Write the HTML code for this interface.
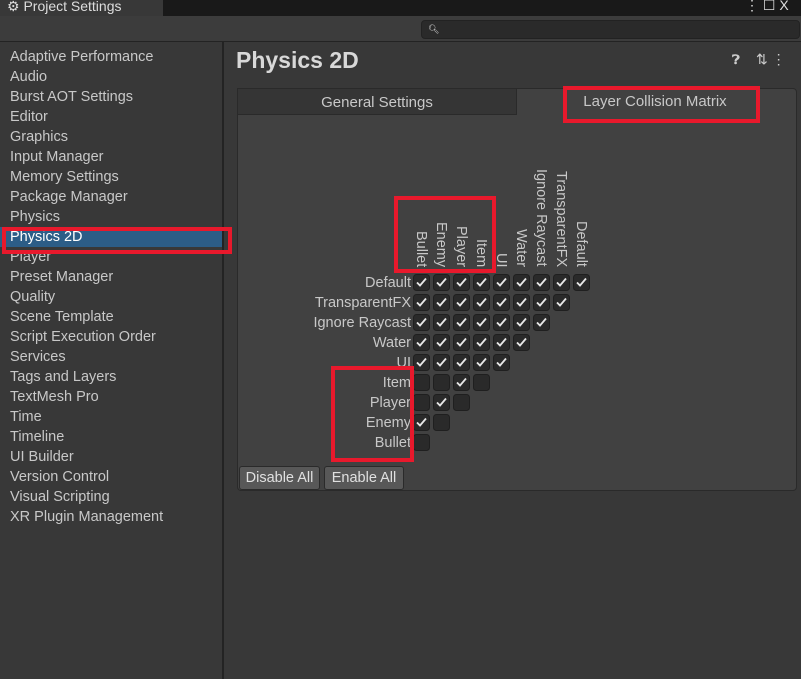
<!DOCTYPE html><html><head><style>
*{margin:0;padding:0;box-sizing:border-box}
body{width:801px;height:679px;background:#383838;font-family:"Liberation Sans",sans-serif;color:#c8c8c8;position:relative;overflow:hidden;font-size:14.5px}
.a{position:absolute}
.side div{height:20px;line-height:20px;padding-left:10px;white-space:nowrap}
.rl{position:absolute;right:390px;font-size:14.5px;line-height:20px;text-align:right;white-space:nowrap}
.cl{position:absolute;writing-mode:vertical-rl;font-size:14.5px;bottom:412px;line-height:20px;white-space:nowrap;width:20px}
.red{position:absolute;border:4px solid #e8192c}
.btn{position:absolute;top:466px;height:24px;background:#585858;border:1px solid #2a2a2a;border-radius:3px;line-height:23px;text-align:center;color:#e0e0e0}
</style></head><body>
<div class="a" style="left:0;top:0;width:801px;height:16px;background:#191919"></div>
<div class="a" style="left:0;top:0;width:163px;height:16px;background:#383838;font-size:14px;line-height:13px;padding-left:7px;color:#ddd;white-space:nowrap;overflow:hidden">⚙ Project Settings</div>
<div class="a" style="left:745px;top:-3px;color:#ddd;font-size:14px;white-space:nowrap">⋮ ☐ X</div>
<div class="a" style="left:0;top:16px;width:801px;height:26px;background:#3c3c3c;border-bottom:1px solid #232323"></div>
<div class="a" style="left:421px;top:20px;width:379px;height:19px;background:#2a2a2a;border:1px solid #222;border-radius:4px;font-size:9px;color:#ddd;line-height:17px;padding-left:6px">🔍︎</div>
<div class="a" style="left:222px;top:42px;width:2px;height:637px;background:#232323"></div>
<div class="a side" style="left:0;top:47px;width:222px">
<div>Adaptive Performance</div><div>Audio</div><div>Burst AOT Settings</div><div>Editor</div><div>Graphics</div><div>Input Manager</div><div>Memory Settings</div><div>Package Manager</div><div>Physics</div><div style="background:#2c5d87;color:#fff">Physics 2D</div><div>Player</div><div>Preset Manager</div><div>Quality</div><div>Scene Template</div><div>Script Execution Order</div><div>Services</div><div>Tags and Layers</div><div>TextMesh Pro</div><div>Time</div><div>Timeline</div><div>UI Builder</div><div>Version Control</div><div>Visual Scripting</div><div>XR Plugin Management</div></div>
<div class="red" style="left:2px;top:227px;width:230px;height:27px"></div>
<div class="a" style="left:236px;top:47px;font-size:23px;font-weight:bold;color:#d8d8d8">Physics 2D</div>
<div class="a" style="left:732px;top:52px;font-size:13px;color:#ccc;font-weight:bold">❓︎</div>
<div class="a" style="left:756px;top:51px;font-size:14px;color:#ccc;white-space:nowrap">⇅ ⋮</div>
<div class="a" style="left:237px;top:88px;width:560px;height:403px;background:#414141;border:1px solid #2a2a2a;border-radius:4px"></div>
<div class="a" style="left:237px;top:88px;width:280px;height:27px;background:#353535;border:1px solid #2a2a2a;text-align:center;line-height:27px;font-size:15px">General Settings</div>
<div class="a" style="left:517px;top:88px;width:280px;height:27px;text-align:center;line-height:28px;font-size:15px;padding-right:4px">Layer Collision Matrix</div>
<div class="red" style="left:563px;top:86px;width:197px;height:37px"></div>
<div class="a" style="left:0;top:0;width:801px;height:679px">
<div class="cl" style="left:411px">Bullet</div><div class="cl" style="left:431px">Enemy</div><div class="cl" style="left:451px">Player</div><div class="cl" style="left:471px">Item</div><div class="cl" style="left:491px">UI</div><div class="cl" style="left:511px">Water</div><div class="cl" style="left:531px">Ignore Raycast</div><div class="cl" style="left:551px">TransparentFX</div><div class="cl" style="left:571px">Default</div>
<div class="rl" style="top:273px">Default</div><div class="rl" style="top:293px">TransparentFX</div><div class="rl" style="top:313px">Ignore Raycast</div><div class="rl" style="top:333px">Water</div><div class="rl" style="top:353px">UI</div><div class="rl" style="top:373px">Item</div><div class="rl" style="top:393px">Player</div><div class="rl" style="top:413px">Enemy</div><div class="rl" style="top:433px">Bullet</div>
</div>
<svg class="a" style="left:0;top:0" width="801" height="679">
<defs><g id="c"><rect x="0.5" y="0.5" width="16" height="16" rx="3" fill="#2a2a2a" stroke="#1f1f1f"/></g>
<g id="k"><use href="#c"/><path d="M4 8.5 L7 11.5 L13 4.5" stroke="#e8e8e8" stroke-width="1.8" fill="none"/></g></defs>
<g>
<use href="#k" x="413" y="274"/><use href="#k" x="433" y="274"/><use href="#k" x="453" y="274"/><use href="#k" x="473" y="274"/><use href="#k" x="493" y="274"/><use href="#k" x="513" y="274"/><use href="#k" x="533" y="274"/><use href="#k" x="553" y="274"/><use href="#k" x="573" y="274"/>
<use href="#k" x="413" y="294"/><use href="#k" x="433" y="294"/><use href="#k" x="453" y="294"/><use href="#k" x="473" y="294"/><use href="#k" x="493" y="294"/><use href="#k" x="513" y="294"/><use href="#k" x="533" y="294"/><use href="#k" x="553" y="294"/>
<use href="#k" x="413" y="314"/><use href="#k" x="433" y="314"/><use href="#k" x="453" y="314"/><use href="#k" x="473" y="314"/><use href="#k" x="493" y="314"/><use href="#k" x="513" y="314"/><use href="#k" x="533" y="314"/>
<use href="#k" x="413" y="334"/><use href="#k" x="433" y="334"/><use href="#k" x="453" y="334"/><use href="#k" x="473" y="334"/><use href="#k" x="493" y="334"/><use href="#k" x="513" y="334"/>
<use href="#k" x="413" y="354"/><use href="#k" x="433" y="354"/><use href="#k" x="453" y="354"/><use href="#k" x="473" y="354"/><use href="#k" x="493" y="354"/>
<use href="#c" x="413" y="374"/><use href="#c" x="433" y="374"/><use href="#k" x="453" y="374"/><use href="#c" x="473" y="374"/>
<use href="#c" x="413" y="394"/><use href="#k" x="433" y="394"/><use href="#c" x="453" y="394"/>
<use href="#k" x="413" y="414"/><use href="#c" x="433" y="414"/>
<use href="#c" x="413" y="434"/>
</g></svg>
<div class="red" style="left:394px;top:196px;width:102px;height:77px"></div>
<div class="red" style="left:331px;top:366px;width:83px;height:96px"></div>
<div class="btn" style="left:239px;width:81px">Disable All</div>
<div class="btn" style="left:324px;width:80px">Enable All</div>
</body></html>
